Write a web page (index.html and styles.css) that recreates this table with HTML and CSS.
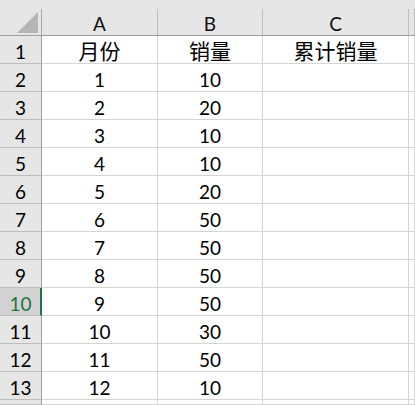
FILE: index.html
```html
<!DOCTYPE html>
<html lang="zh">
<head>
<meta charset="utf-8">
<link rel="stylesheet" href="styles.css">
</head>
<body>
<div class="sheet">
  <div class="hrow">
    <div class="corner"><svg width="21" height="21" viewBox="0 0 21 21"><polygon points="21,0 21,21 0,21" fill="#b5b5b5"/></svg></div>
    <div class="ch ca">A</div>
    <div class="ch cb">B</div>
    <div class="ch cc">C</div>
    <div class="ch cd"></div>
  </div>
  <div class="row"><div class="rh">1</div><div class="c ca cjk">月份</div><div class="c cb cjk">销量</div><div class="c cc cjk">累计销量</div><div class="c cd"></div></div>
  <div class="row"><div class="rh">2</div><div class="c ca">1</div><div class="c cb">10</div><div class="c cc"></div><div class="c cd"></div></div>
  <div class="row"><div class="rh">3</div><div class="c ca">2</div><div class="c cb">20</div><div class="c cc"></div><div class="c cd"></div></div>
  <div class="row"><div class="rh">4</div><div class="c ca">3</div><div class="c cb">10</div><div class="c cc"></div><div class="c cd"></div></div>
  <div class="row"><div class="rh">5</div><div class="c ca">4</div><div class="c cb">10</div><div class="c cc"></div><div class="c cd"></div></div>
  <div class="row"><div class="rh">6</div><div class="c ca">5</div><div class="c cb">20</div><div class="c cc"></div><div class="c cd"></div></div>
  <div class="row"><div class="rh">7</div><div class="c ca">6</div><div class="c cb">50</div><div class="c cc"></div><div class="c cd"></div></div>
  <div class="row"><div class="rh">8</div><div class="c ca">7</div><div class="c cb">50</div><div class="c cc"></div><div class="c cd"></div></div>
  <div class="row"><div class="rh">9</div><div class="c ca">8</div><div class="c cb">50</div><div class="c cc"></div><div class="c cd"></div></div>
  <div class="row"><div class="rh sel">10</div><div class="c ca">9</div><div class="c cb">50</div><div class="c cc"></div><div class="c cd"></div></div>
  <div class="row"><div class="rh">11</div><div class="c ca">10</div><div class="c cb">30</div><div class="c cc"></div><div class="c cd"></div></div>
  <div class="row"><div class="rh">12</div><div class="c ca">11</div><div class="c cb">50</div><div class="c cc"></div><div class="c cd"></div></div>
  <div class="row"><div class="rh">13</div><div class="c ca">12</div><div class="c cb">10</div><div class="c cc"></div><div class="c cd"></div></div>
  <div class="row last"><div class="rh"></div><div class="c ca"></div><div class="c cb"></div><div class="c cc"></div><div class="c cd"></div></div>
</div>
</body>
</html>
```
FILE: styles.css
```css
html, body {
  margin: 0;
  padding: 0;
  background: #ffffff;
}
body {
  width: 415px;
  height: 405px;
  overflow: hidden;
  font-family: Lato, "Noto Sans CJK SC", sans-serif;
  font-size: 19px;
  color: #000;
}
.sheet {
  display: flex;
  flex-direction: column;
  height: 405px;
  overflow: hidden;
}
.hrow {
  display: flex;
  flex: none;
  height: 36px;
  box-sizing: border-box;
  background: #e6e6e6;
  border-bottom: 1px solid #9e9e9e;
  padding-top: 9px;
}
.corner {
  width: 42px;
  flex: none;
  box-sizing: border-box;
  border-right: 1px solid #a8a8a8;
  display: flex;
  justify-content: flex-end;
  align-items: flex-end;
  padding: 0 3px 2px 0;
}
.corner svg { display: block; }
.ch {
  box-sizing: border-box;
  border-right: 1px solid #bdbdbd;
  display: flex;
  align-items: center;
  justify-content: center;
  line-height: 1;
  padding-top: 3px;
  color: #111;
}
.ca { width: 116px; flex: none; }
.cb { width: 105px; flex: none; }
.cc { width: 146px; flex: none; }
.cd { flex: 1; }
.row {
  display: flex;
  flex: none;
  height: 28px;
}
.row.last {
  flex: 1;
  min-height: 0;
}
.rh {
  width: 42px;
  flex: none;
  box-sizing: border-box;
  background: #e6e6e6;
  border-right: 1px solid #9e9e9e;
  border-bottom: 1px solid #bdbdbd;
  display: flex;
  align-items: center;
  justify-content: center;
  line-height: 1;
  padding-top: 3px;
  color: #000;
}
.rh.sel {
  background: #d2d2d2;
  color: #217346;
  border-right: 2px solid #217346;
  padding-left: 1px;
}
.c {
  box-sizing: border-box;
  border-right: 1px solid #d4d4d4;
  border-bottom: 1px solid #d4d4d4;
  display: flex;
  align-items: center;
  justify-content: center;
  line-height: 1;
  padding-top: 3px;
}
.cjk {
  font-family: "Noto Sans CJK SC", sans-serif;
  font-size: 21px;
  padding-top: 2px;
}
```
